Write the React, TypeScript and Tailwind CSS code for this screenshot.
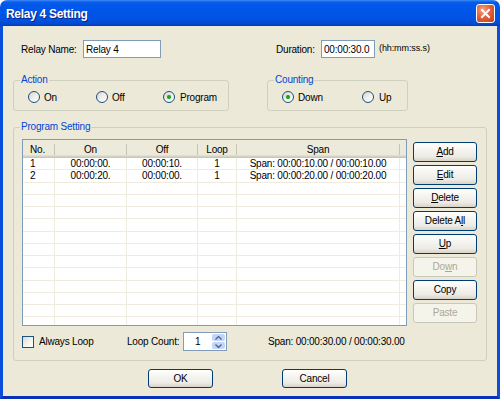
import React from "react";

function Btn({
  children,
  disabled,
  className = "",
}: {
  children: React.ReactNode;
  disabled?: boolean;
  className?: string;
}) {
  return (
    <div
      className={`flex items-center justify-center rounded-[3px] border leading-none ${
        disabled
          ? "border-[#C9C7BA] bg-[#F5F4EA] text-[#ACA899]"
          : "border-[#003C74] bg-[linear-gradient(to_bottom,#ffffff_0%,#f6f5f0_35%,#ecebe5_75%,#d8d3c8_100%)] text-black"
      } ${className}`}
    >
      {children}
    </div>
  );
}

function Radio({ checked }: { checked?: boolean }) {
  return (
    <div className="flex h-[12px] w-[12px] items-center justify-center rounded-full border border-[#1C5180] bg-[linear-gradient(135deg,#d8d5ca_0%,#f2f1ec_55%,#ffffff_100%)]">
      {checked && <div className="h-[4px] w-[4px] rounded-full bg-[#21A121] shadow-[0_0_1px_#5fd35f]" />}
    </div>
  );
}

function Group({
  label,
  className = "",
  children,
}: {
  label: string;
  className?: string;
  children?: React.ReactNode;
}) {
  return (
    <div className={`relative rounded-[3px] border border-[#D0D0BF] ${className}`}>
      <span className="absolute left-[6px] top-[-7px] bg-[#ECE9D8] px-[1px] leading-[12px] text-[#0046D5]">
        {label}
      </span>
      {children}
    </div>
  );
}

const colW = ["w-[32px]", "w-[72px]", "w-[71px]", "w-[39px]", "w-[163px]"];

const rows = [
  ["1", "00:00:00.", "00:00:10.", "1", "Span: 00:00:10.00 / 00:00:10.00"],
  ["2", "00:00:20.", "00:00:00.", "1", "Span: 00:00:20.00 / 00:00:20.00"],
];

function HeaderCell({ w, label, left }: { w: string; label: string; left?: boolean }) {
  return (
    <div className={`flex h-full shrink-0 items-center ${w}`}>
      <div className={`flex-1 ${left ? "pl-[7px] text-left" : "text-center"}`}>{label}</div>
      <div className="h-[11px] w-[1px] bg-[#C7C5B2]" />
    </div>
  );
}

function ListView() {
  const body = [];
  for (let i = 0; i < 14; i++) {
    const r = rows[i];
    body.push(
      <div key={i} className="flex h-[12.25px] shrink-0 border-b border-[#EFEBDE]">
        {colW.map((w, c) => (
          <div
            key={c}
            className={`flex shrink-0 items-center border-r border-[#EFEBDE] leading-none ${w} ${
              c === 0 ? "justify-start pl-[7px]" : "justify-center"
            }`}
          >
            {r ? r[c] : ""}
          </div>
        ))}
        <div className="flex-1" />
      </div>
    );
  }
  return (
    <div className="flex h-[187px] w-[385px] shrink-0 flex-col overflow-hidden border border-[#7F9DB9] bg-white">
      <div className="flex h-[18px] shrink-0 bg-[linear-gradient(to_bottom,#EBEADB_0%,#EBEADB_82%,#E2DECD_83%,#E2DECD_88%,#D6D2C2_89%,#D6D2C2_94%,#CBC7B8_95%,#CBC7B8_100%)]">
        <HeaderCell w={colW[0]} label="No." left />
        <HeaderCell w={colW[1]} label="On" />
        <HeaderCell w={colW[2]} label="Off" />
        <HeaderCell w={colW[3]} label="Loop" />
        <HeaderCell w={colW[4]} label="Span" />
        <div className="flex-1" />
      </div>
      {body}
    </div>
  );
}

export default function App() {
  return (
    <div className="h-[399px] w-[500px] bg-white font-['Liberation_Sans',Arial,sans-serif] text-[10px] tracking-[-0.2px] text-black">
      <div className="flex h-full w-full flex-col overflow-hidden rounded-t-[7px]">
        {/* Title bar */}
        <div className="flex h-[26px] shrink-0 items-start justify-between bg-[linear-gradient(to_bottom,#3C8CF7_0%,#0A5DE7_8%,#0058EA_20%,#0054E6_50%,#0052E2_75%,#0448CF_92%,#003BB5_100%)] pl-[6px] pr-[5px]">
          <div className="mt-[7px] text-[12px] font-bold leading-[14px] tracking-[-0.3px] text-white [text-shadow:1px_1px_0_#0A1E80]">
            Relay 4 Setting
          </div>
          <div className="mt-[4px] flex h-[19px] w-[19px] items-center justify-center rounded-[3px] border border-white bg-[radial-gradient(circle_at_35%_30%,#F0A58A_0%,#E2623D_45%,#C43C14_100%)]">
            <svg width="11" height="11" viewBox="0 0 11 11">
              <path d="M2 2 L9 9 M9 2 L2 9" stroke="white" strokeWidth="2" strokeLinecap="square" />
            </svg>
          </div>
        </div>

        {/* Client */}
        <div className="flex flex-1 flex-col border-x-[3px] border-b-[3px] border-x-[#0A4FDB] border-b-[#0831B8] bg-[#ECE9D8]">
          {/* Row 1 */}
          <div className="mt-[14px] flex h-[18px] items-center pl-[18px]">
            <div className="w-[62px]">Relay Name:</div>
            <div className="flex h-[18px] w-[78px] items-center border border-[#7F9DB9] bg-white pl-[2px]">
              Relay 4
            </div>
            <div className="ml-[115px] w-[45px]">Duration:</div>
            <div className="flex h-[18px] w-[54px] items-center border border-[#7F9DB9] bg-white pl-[2px]">
              00:00:30.0
            </div>
            <div className="ml-[4px] text-[9px] tracking-[-0.1px]">(hh:mm:ss.s)</div>
          </div>

          {/* Row 2 */}
          <div className="mt-[22px] flex">
            <Group label="Action" className="ml-[10px] h-[31px] w-[216px]">
              <div className="flex h-full items-center pl-[14px] pt-[3px]">
                <div className="flex w-[68px] items-center">
                  <Radio />
                  <span className="ml-[4px]">On</span>
                </div>
                <div className="flex w-[67px] items-center">
                  <Radio />
                  <span className="ml-[4px]">Off</span>
                </div>
                <div className="flex items-center">
                  <Radio checked />
                  <span className="ml-[5px]">Program</span>
                </div>
              </div>
            </Group>
            <Group label="Counting" className="ml-[38px] h-[31px] w-[141px]">
              <div className="flex h-full items-center pl-[14px] pt-[3px]">
                <div className="flex w-[80px] items-center">
                  <Radio checked />
                  <span className="ml-[4px]">Down</span>
                </div>
                <div className="flex items-center">
                  <Radio />
                  <span className="ml-[5px]">Up</span>
                </div>
              </div>
            </Group>
          </div>

          {/* Program setting */}
          <Group label="Program Setting" className="ml-[10px] mt-[16px] h-[234px] w-[474px]">
            <div className="flex flex-col pl-[8px] pt-[11px]">
              <div className="flex">
                <ListView />
                <div className="ml-[6px] mt-[3px] flex flex-col gap-[3px]">
                  <Btn className="h-[20px] w-[64px]">
                    <span>
                      <u>A</u>dd
                    </span>
                  </Btn>
                  <Btn className="h-[20px] w-[64px]">
                    <span>
                      <u>E</u>dit
                    </span>
                  </Btn>
                  <Btn className="h-[20px] w-[64px]">
                    <span>
                      <u>D</u>elete
                    </span>
                  </Btn>
                  <Btn className="h-[20px] w-[64px]">
                    <span>
                      Delete A<u>l</u>l
                    </span>
                  </Btn>
                  <Btn className="h-[20px] w-[64px]">
                    <span>
                      <u>U</u>p
                    </span>
                  </Btn>
                  <Btn disabled className="h-[20px] w-[64px]">
                    <span>
                      Do<u>w</u>n
                    </span>
                  </Btn>
                  <Btn className="h-[20px] w-[64px]">Copy</Btn>
                  <Btn disabled className="h-[20px] w-[64px]">
                    Paste
                  </Btn>
                </div>
              </div>
              <div className="mt-[6px] flex h-[19px] items-center">
                <div className="flex w-[105px] items-center">
                  <div className="h-[12px] w-[12px] border border-[#1C5180] bg-[linear-gradient(135deg,#dcd9cf_0%,#f4f3ee_55%,#ffffff_100%)]" />
                  <span className="ml-[5px]">Always Loop</span>
                </div>
                <div className="w-[56px]">Loop Count:</div>
                <div className="flex h-[19px] w-[44px] items-center border border-[#7F9DB9] bg-white">
                  <div className="flex-1 pl-[11px]">1</div>
                  <div className="mr-[1px] flex h-[15px] w-[13px] flex-col gap-[1px]">
                    <div className="flex flex-1 items-center justify-center rounded-[2px] bg-[#C4D4F8]">
                      <svg width="7" height="4" viewBox="0 0 7 4">
                        <path d="M0.5 3.5 L3.5 0.5 L6.5 3.5" stroke="#4D6185" strokeWidth="1.3" fill="none" />
                      </svg>
                    </div>
                    <div className="flex flex-1 items-center justify-center rounded-[2px] bg-[#C4D4F8]">
                      <svg width="7" height="4" viewBox="0 0 7 4">
                        <path d="M0.5 0.5 L3.5 3.5 L6.5 0.5" stroke="#4D6185" strokeWidth="1.3" fill="none" />
                      </svg>
                    </div>
                  </div>
                </div>
                <div className="ml-[41px]">Span: 00:00:30.00 / 00:00:30.00</div>
              </div>
            </div>
          </Group>

          {/* OK / Cancel */}
          <div className="ml-[145px] mt-[8px] flex gap-[69px]">
            <Btn className="h-[19px] w-[65px]">OK</Btn>
            <Btn className="h-[19px] w-[65px]">Cancel</Btn>
          </div>
        </div>
      </div>
    </div>
  );
}
